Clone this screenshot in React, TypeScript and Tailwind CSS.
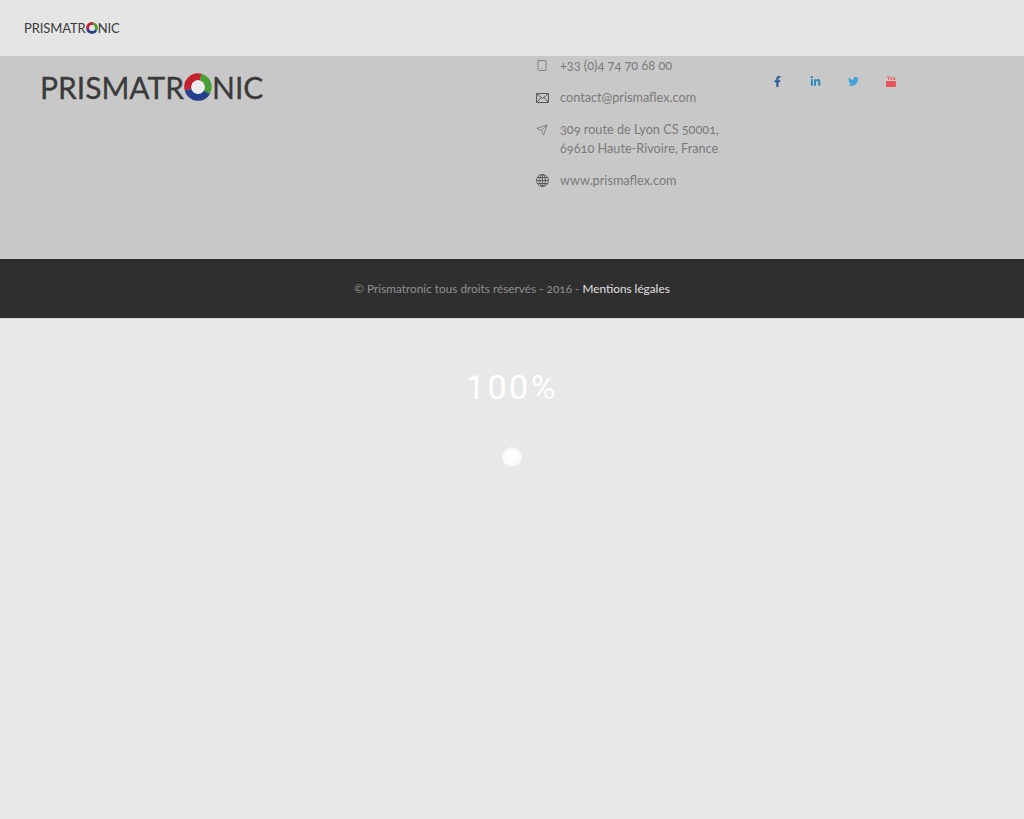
import { Send, Tablet } from "lucide-react";
import { FaFacebookF, FaLinkedinIn, FaTwitter } from "react-icons/fa";
import type { ReactNode } from "react";

function LogoRing({ size, hole }: { size: number; hole: string }) {
  return (
    <svg width={size} height={size} viewBox="0 0 28 28" className="shrink-0">
      <g fill="none" strokeWidth="7">
        <path d="M4.1 16.65A10.25 10.25 0 0 1 16.65 4.1" stroke="#c4202e" />
        <path d="M16.65 4.1A10.25 10.25 0 0 1 22.88 19.13" stroke="#4a9e36" />
        <path d="M22.88 19.13A10.25 10.25 0 0 1 4.1 16.65" stroke="#27408b" />
      </g>
      <circle cx="14" cy="14" r="6.75" fill={hole} />
    </svg>
  );
}

function Logo({ big }: { big?: boolean }) {
  return (
    <div
      className={`flex items-center font-['Lato',sans-serif] font-normal leading-none text-[#3a3a3a] ${
        big ? "text-[30px] [-webkit-text-stroke:0.3px_#3a3a3a]" : "text-[13px] tracking-[-0.1px]"
      }`}
    >
      <span>PRISMATR</span>
      <LogoRing size={big ? 28 : 12} hole={big ? "#ececec" : "#e5e5e5"} />
      <span>NIC</span>
    </div>
  );
}

function ContactRow({ icon, children }: { icon: ReactNode; children: ReactNode }) {
  return (
    <div className="flex gap-3">
      <div className="flex h-[19px] w-[12px] shrink-0 items-center justify-center text-[#555]">{icon}</div>
      <div className="leading-[19px]">{children}</div>
    </div>
  );
}

function EnvelopeIcon() {
  return (
    <svg width="13" height="10" viewBox="0 0 13 10" fill="none" stroke="currentColor" strokeWidth="1" className="shrink-0">
      <rect x="0.5" y="0.5" width="12" height="9" rx="0.5" />
      <path d="M1 1l5.5 4.5L12 1M1 9l4-4.5M12 9L8 4.5" />
    </svg>
  );
}

function GlobeIcon() {
  return (
    <svg width="13" height="13" viewBox="0 0 13 13" fill="none" stroke="currentColor" strokeWidth="0.9" className="shrink-0">
      <circle cx="6.5" cy="6.5" r="6" />
      <ellipse cx="6.5" cy="6.5" rx="2.8" ry="6" />
      <path d="M6.5.5v12M.5 6.5h12M1.4 3.5h10.2M1.4 9.5h10.2" />
    </svg>
  );
}

function YoutubeIcon() {
  return (
    <svg width="10" height="11" viewBox="0 0 10 11" className="shrink-0">
      <path d="M1 0h1l.5 1.5L3 0h1L3 2.5V4H2V2.5ZM4.5 1.2h1.6V4H4.5ZM7 1.2h.9V3.3H8.6V1.2h.9V4H7Z" fill="#e8646a" />
      <rect x="0" y="5" width="10" height="6" rx="1" fill="#e8545a" />
    </svg>
  );
}

export default function App() {
  return (
    <div className="flex h-[819px] flex-col overflow-hidden bg-[#e8e8e8] font-['Lato',sans-serif]">
      {/* Top bar */}
      <header className="flex h-14 shrink-0 items-center bg-[#e5e5e5] pl-6">
        <Logo />
      </header>

      {/* Footer block */}
      <section className="flex h-[203px] shrink-0 bg-[#c8c8c8]">
        <div className="w-[536px] shrink-0 pl-10 pt-4">
          <Logo big />
        </div>
        <div className="flex w-[236px] shrink-0 flex-col gap-[13px] text-[12.7px] text-[#7a7a7a] oldstyle-nums">
          <ContactRow icon={<Tablet size={15} strokeWidth={1.2} />}>+33 (0)4 74 70 68 00</ContactRow>
          <ContactRow icon={<EnvelopeIcon />}>contact@prismaflex.com</ContactRow>
          <ContactRow icon={<Send size={14} strokeWidth={1.2} />}>
            309 route de Lyon CS 50001,
            <br />
            69610 Haute-Rivoire, France
          </ContactRow>
          <ContactRow icon={<GlobeIcon />}>www.prismaflex.com</ContactRow>
        </div>
        <div className="flex h-[51px] items-center gap-[27px]">
          <FaFacebookF size={11} className="text-[#2b5a9e]" />
          <FaLinkedinIn size={11} className="text-[#2f86b8]" />
          <FaTwitter size={11} className="text-[#41a3d8]" />
          <YoutubeIcon />
        </div>
      </section>

      {/* Copyright */}
      <section className="flex h-[59px] shrink-0 items-center justify-center bg-[#2f2f2f] text-[11.8px] text-[#8f8f8f] oldstyle-nums">
        <span>
          © Prismatronic tous droits réservés - 2016 - <a className="text-[#e0e0e0]">Mentions légales</a>
        </span>
      </section>

      {/* Loader */}
      <main className="flex flex-1 flex-col items-center border-t border-[#d8d8d8] bg-[#e8e8e8] pt-[47px]">
        <div className="font-['Roboto',sans-serif] text-[34px] font-normal leading-[42px] tracking-[2.6px] text-white">
          100%
        </div>
        <div className="mt-[39px] h-5 w-5 rounded-full bg-radial from-[#fcfcfc] from-45% to-[#f0f0f0]" />
      </main>
    </div>
  );
}
